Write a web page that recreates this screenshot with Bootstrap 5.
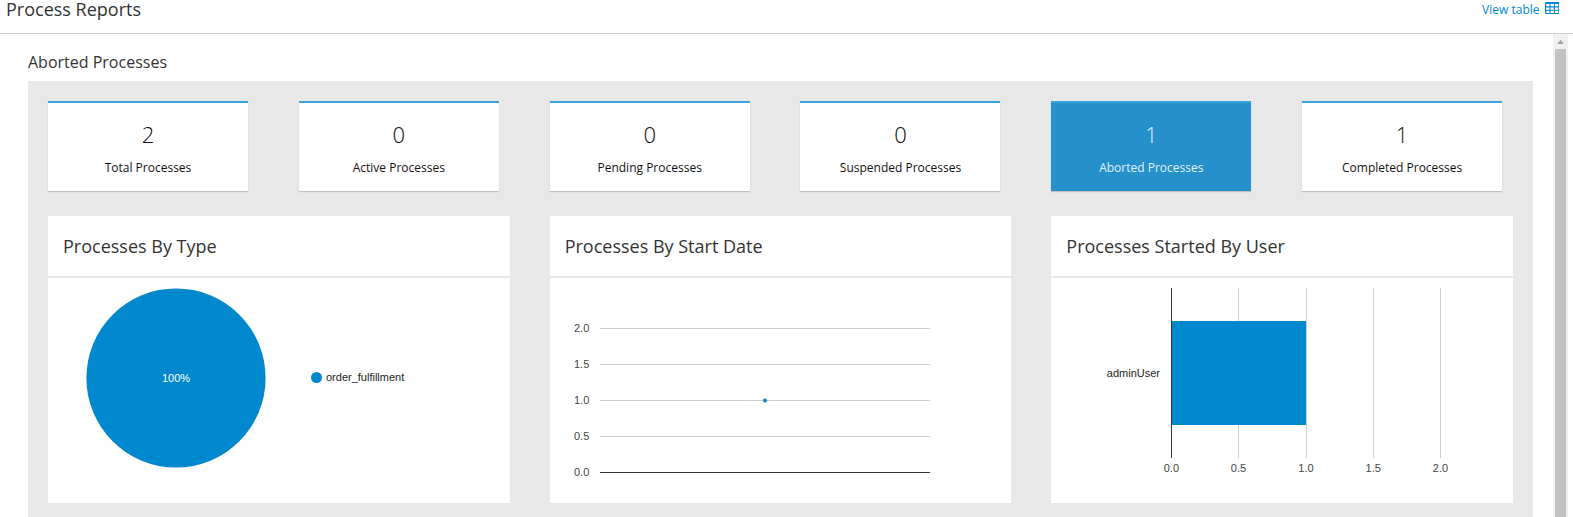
<!DOCTYPE html>
<html lang="en">
<head>
<meta charset="utf-8">
<title>Process Reports</title>
<link href="https://cdn.jsdelivr.net/npm/bootstrap@5.3.0/dist/css/bootstrap.min.css" rel="stylesheet">
<style>
body{font-family:"Open Sans",sans-serif;font-size:12px;color:#333;height:517px;overflow:hidden}
.page-head{height:34px;border-bottom:1px solid #ccc;padding:0 14px 0 6px}
.page-head h1{font-size:18px;line-height:18px;margin:0}
.page-head a{color:#0088ce;line-height:20px}
.table-icon{margin:2px 0 0 5px}
.main-area{height:483px;overflow:hidden;padding-right:5px}
.report{padding:17px 20px 0 28px}
.report h2{font-size:16px;line-height:22px;margin:0 0 8px}
.panel{background:#e8e8e8;height:436px;padding-top:20px}
.panel .row{--bs-gutter-x:40px;margin:0}
.panel .chart-row{padding-top:25px}
.stat{width:200px;height:90px;border:0;border-top:2px solid #39a5dc;box-shadow:0 1px 1px rgba(3,3,3,.175);color:#111;text-align:center;background:#fff;padding-top:19px}
.stat.selected{background:#2590c9;color:#e4f2fa}
.stat .num{font-family:"Open Sans Light","Open Sans",sans-serif;font-weight:300;font-size:22px;line-height:24px}
.stat .cap{line-height:20px;margin-top:12px}
.chart{border:0;border-radius:0;height:287px}
.chart h3{font-size:18px;line-height:60px;height:62px;margin:0;padding-left:15px;border-bottom:2px solid #e8e8e8}
.chart svg{display:block;font-family:"Liberation Sans",sans-serif;font-size:11px;fill:#444}
.grid-line{stroke:#ccc;shape-rendering:crispEdges}
.axis-line{stroke:#333;shape-rendering:crispEdges}
.scroller{width:15px;background:#f1f1f1}
.scroller .arrow{height:15px}
.scroller .thumb{width:11px;background:#c1c1c1;margin-left:2px}
</style>
</head>
<body>
<header class="page-head d-flex justify-content-between align-items-start">
  <h1 class="fw-normal">Process Reports</h1>
  <a href="#" class="text-decoration-none d-flex">View table
    <svg class="table-icon" width="14.500" height="12" viewBox="0 0 14.5 12"><path fill="#0088ce" fill-rule="evenodd" d="M1 0h12.500l1 1v10l-1 1H1l-1-1V1zM1.200 2v2.300h3.300V2zM5.600 2v2.300h3.300V2zM10 2v2.300h3.300V2zM1.200 5.400v2.300h3.300V5.400zM5.600 5.400v2.300h3.300V5.400zM10 5.400v2.300h3.300V5.400zM1.200 8.700V11h3.300V8.700zM5.600 8.700V11h3.300V8.700zM10 8.700V11h3.300V8.700z"/></svg>
  </a>
</header>
<div class="main-area d-flex">
  <main class="report flex-grow-1">
    <h2 class="fw-normal">Aborted Processes</h2>
    <div class="panel">
      <div class="row">
        <div class="col-2"><div class="stat"><div class="num">2</div><div class="cap">Total Processes</div></div></div>
        <div class="col-2"><div class="stat"><div class="num">0</div><div class="cap">Active Processes</div></div></div>
        <div class="col-2"><div class="stat"><div class="num">0</div><div class="cap">Pending Processes</div></div></div>
        <div class="col-2"><div class="stat"><div class="num">0</div><div class="cap">Suspended Processes</div></div></div>
        <div class="col-2"><div class="stat selected"><div class="num">1</div><div class="cap">Aborted Processes</div></div></div>
        <div class="col-2"><div class="stat"><div class="num">1</div><div class="cap">Completed Processes</div></div></div>
      </div>
      <div class="row chart-row">
        <div class="col-4">
          <div class="card chart">
            <h3 class="fw-normal">Processes By Type</h3>
            <svg width="460" height="225">
              <circle cx="128" cy="100" r="89.600" fill="#0088ce"/>
              <text x="128" y="104" text-anchor="middle" fill="#fff">100%</text>
              <circle cx="268.500" cy="99.500" r="5.500" fill="#0088ce"/>
              <text x="278" y="103" fill="#222">order_fulfillment</text>
            </svg>
          </div>
        </div>
        <div class="col-4">
          <div class="card chart">
            <h3 class="fw-normal">Processes By Start Date</h3>
            <svg width="460" height="225">
              <path class="grid-line" d="M50 50.500h330M50 86.500h330M50 122.500h330M50 158.500h330"/>
              <path class="axis-line" d="M50 194.500h330"/>
              <circle cx="215" cy="122.500" r="2" fill="#0088ce"/>
              <g text-anchor="end"><text x="39.300" y="54">2.0</text><text x="39.300" y="90">1.5</text><text x="39.300" y="126">1.0</text><text x="39.300" y="162">0.5</text><text x="39.300" y="198">0.0</text></g>
            </svg>
          </div>
        </div>
        <div class="col-4">
          <div class="card chart">
            <h3 class="fw-normal">Processes Started By User</h3>
            <svg width="460" height="225">
              <path class="grid-line" d="M187.200 10v170M255.200 10v170M322.200 10v170M389.200 10v170"/>
              <rect x="120.700" y="43" width="134" height="104" fill="#0088ce" shape-rendering="crispEdges"/>
              <path class="axis-line" d="M120.200 10v170"/>
              <text x="109" y="98.500" text-anchor="end" fill="#222">adminUser</text>
              <g text-anchor="middle"><text x="120.400" y="194">0.0</text><text x="187.500" y="194">0.5</text><text x="255" y="194">1.0</text><text x="322.200" y="194">1.5</text><text x="389.500" y="194">2.0</text></g>
            </svg>
          </div>
        </div>
      </div>
    </div>
  </main>
  <div class="scroller flex-shrink-0">
    <svg class="arrow d-block" width="15" height="15"><path d="M4 10h7L7.500 6z" fill="#a3a3a3"/></svg>
    <div class="thumb h-100"></div>
  </div>
</div>
<script src="https://cdn.jsdelivr.net/npm/bootstrap@5.3.0/dist/js/bootstrap.bundle.min.js"></script>
</body>
</html>
